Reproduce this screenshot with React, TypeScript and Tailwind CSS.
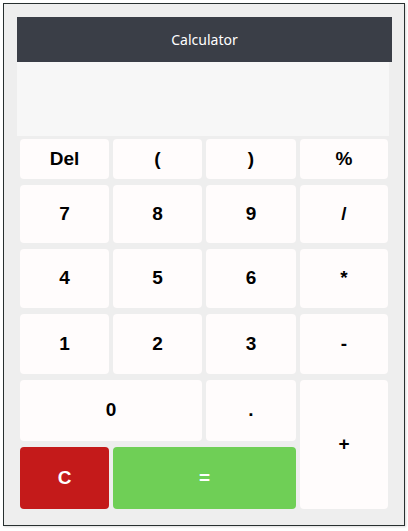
import React from 'react'

type Key = {
    label: string
    className?: string
}

const keys: Key[] = [
    { label: 'Del' },
    { label: '(' },
    { label: ')' },
    { label: '%' },
    { label: '7' },
    { label: '8' },
    { label: '9' },
    { label: '/' },
    { label: '4' },
    { label: '5' },
    { label: '6' },
    { label: '*' },
    { label: '1' },
    { label: '2' },
    { label: '3' },
    { label: '-' },
    { label: '0', className: 'col-span-2' },
    { label: '.' },
    { label: '+', className: 'row-span-2' },
    { label: 'C', className: 'bg-[#c41a1a] text-white' },
    { label: '=', className: 'col-span-2 bg-[#6fcf56] text-white' },
]

const App = () => {
    return (
        <div className="min-h-[531px] w-[408px] bg-white pt-[3px] pl-[3px]">
            <div className="w-[402px] h-[523px] border border-[#283030] bg-[#eeeeee] pt-[13px] pl-[13px] shadow-[1px_1px_2px_rgba(0,0,0,0.15)]">
                <div className="w-[375px] h-[45px] bg-[#3a3e47] flex items-center justify-center text-white text-[14px] font-['Noto_Sans',sans-serif]">
                    Calculator
                </div>
                <div className="w-[372px] h-[74px] bg-[#f7f7f7]"></div>
                <div className="mt-[3px] ml-[3px] grid grid-cols-[89px_89px_90px_88px] grid-rows-[40px_58px_59px_60px_61px_62px] gap-x-1 gap-y-1.5">
                    {keys.map((k, i) => (
                        <button
                            key={i}
                            className={
                                'rounded flex items-center justify-center text-[19px] font-bold font-["Liberation_Sans",Arial,sans-serif] ' +
                                (k.className && k.className.includes('bg-') ? k.className : 'bg-[#fffcfc] text-black ' + (k.className || ''))
                            }
                        >
                            {k.label}
                        </button>
                    ))}
                </div>
            </div>
        </div>
    )
}

export default App
